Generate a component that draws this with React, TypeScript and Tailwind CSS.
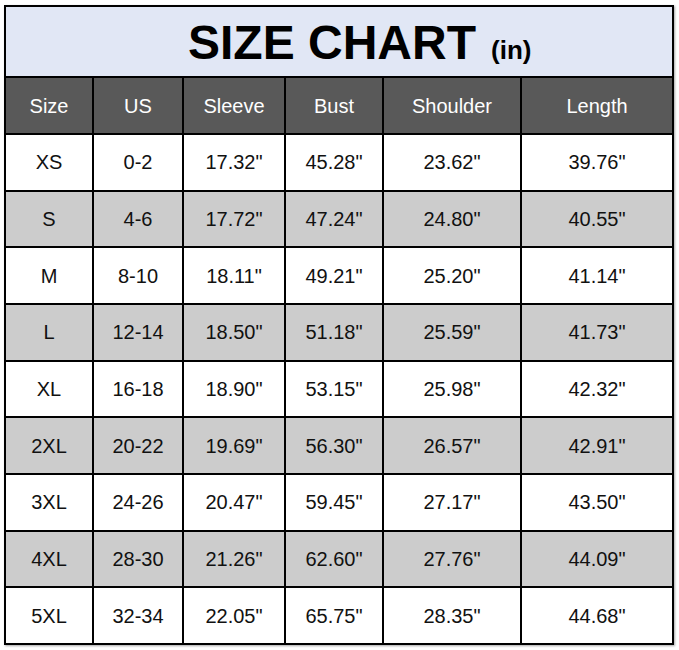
const headers = ["Size", "US", "Sleeve", "Bust", "Shoulder", "Length"];

const rows: string[][] = [
  ["XS", "0-2", '17.32"', '45.28"', '23.62"', '39.76"'],
  ["S", "4-6", '17.72"', '47.24"', '24.80"', '40.55"'],
  ["M", "8-10", '18.11"', '49.21"', '25.20"', '41.14"'],
  ["L", "12-14", '18.50"', '51.18"', '25.59"', '41.73"'],
  ["XL", "16-18", '18.90"', '53.15"', '25.98"', '42.32"'],
  ["2XL", "20-22", '19.69"', '56.30"', '26.57"', '42.91"'],
  ["3XL", "24-26", '20.47"', '59.45"', '27.17"', '43.50"'],
  ["4XL", "28-30", '21.26"', '62.60"', '27.76"', '44.09"'],
  ["5XL", "32-34", '22.05"', '65.75"', '28.35"', '44.68"'],
];

export default function App() {
  return (
    <div className="h-[650px] w-[679px] bg-white pl-[4px] pt-[5px] font-['Liberation_Sans',Arial,sans-serif]">
      <div className="w-[670px] border-2 border-black bg-black shadow-[1px_1px_2px_rgba(0,0,0,0.35)]">
        <div className="flex h-[69px] items-center bg-[#e1e7f5] pl-[182px] pt-[2px] text-black">
          <div className="flex items-baseline">
            <span className="text-[48px] font-bold leading-none">SIZE CHART</span>
            <span className="ml-[15px] text-[26px] font-bold leading-none">(in)</span>
          </div>
        </div>
        <div className="mt-[2px] grid grid-cols-[86px_88px_100px_96px_136px_150px] gap-[2px]">
          {headers.map((h) => (
            <div
              key={h}
              className="flex h-[55px] items-center justify-center bg-[#595959] text-[20px] text-white"
            >
              {h}
            </div>
          ))}
          {rows.map((row, i) =>
            row.map((cell, j) => (
              <div
                key={`${i}-${j}`}
                className={`flex h-[54.67px] items-center justify-center text-[20px] text-[#111] ${
                  i % 2 === 1 ? "bg-[#cccccc]" : "bg-white"
                }`}
              >
                {cell}
              </div>
            ))
          )}
        </div>
      </div>
    </div>
  );
}
